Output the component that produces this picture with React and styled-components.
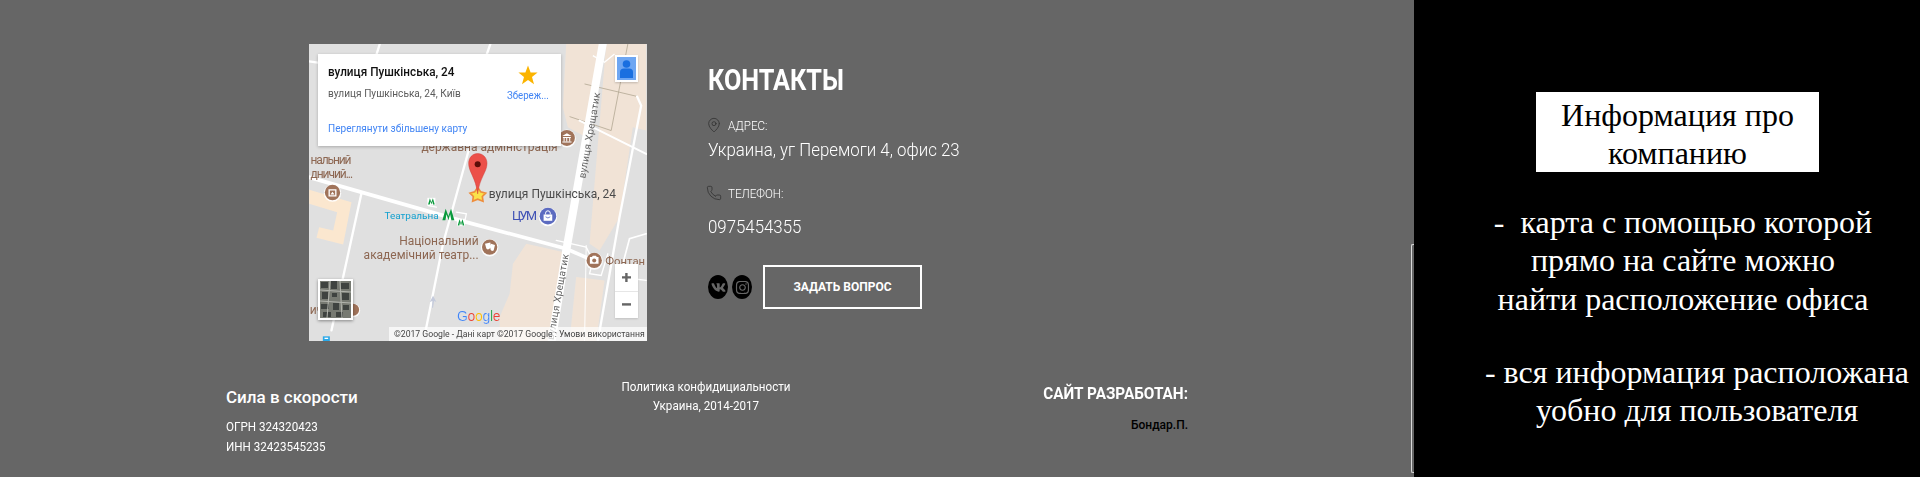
import React from "react";
import styled, { createGlobalStyle } from "styled-components";
import { MapPin, Phone } from "lucide-react";
import { FaVk, FaInstagram } from "react-icons/fa";

const Global = createGlobalStyle`
  html, body { margin: 0; padding: 0; background: #666; }
  body { font-family: Roboto, "Liberation Sans", sans-serif; }
`;

const Page = styled.div`
  display: flex;
  width: 1920px;
  height: 477px;
  overflow: hidden;
`;
const Main = styled.main`
  width: 1414px;
  flex: none;
  background: #666;
  padding: 44px 0 0 226px;
  box-sizing: border-box;
  color: #fff;
`;
const TopRow = styled.section`
  display: flex;
  margin-left: 83px;
  height: 297px;
`;
const MapBox = styled.div`
  position: relative;
  width: 338px;
  height: 297px;
  flex: none;
  overflow: hidden;
  background: #e0e0e0;
  font-family: Roboto, sans-serif;
`;
const MapArt = styled.svg`
  display: block;
  width: 338px;
  height: 297px;
  filter: blur(0.35px);
`;
const InfoCard = styled.div`
  position: absolute;
  left: 9px;
  top: 10px;
  width: 243px;
  height: 92px;
  background: #fff;
  box-shadow: 0 1px 3px rgba(0, 0, 0, 0.25);
`;
const CardText = styled.div`
  position: absolute;
  left: 10px;
  top: ${(p) => p.$top}px;
  font-size: ${(p) => p.$size}px;
  line-height: 16px;
  font-weight: ${(p) => p.$weight || 400};
  color: ${(p) => p.$color};
  white-space: nowrap;
  transform: scaleX(${(p) => p.$sx});
  transform-origin: left center;
`;
const SaveBox = styled.div`
  position: absolute;
  left: 180px;
  top: 11px;
  width: 60px;
  display: flex;
  flex-direction: column;
  align-items: center;
  font-size: 11.5px;
  line-height: 16px;
  color: #4285f4;
  span { transform: scaleX(0.84); margin-top: 2px; }
`;
const Pegman = styled.div`
  position: absolute;
  left: 306px;
  top: 11px;
  width: 23px;
  height: 27px;
  box-sizing: border-box;
  border: 2px solid #fff;
  background: #6ea6f2;
  box-shadow: 0 1px 2px rgba(0, 0, 0, 0.2);
  display: flex;
`;
const ZoomBox = styled.div`
  position: absolute;
  left: 306px;
  top: 220px;
  width: 23px;
  height: 54px;
  background: #fff;
  display: flex;
  flex-direction: column;
  box-shadow: 0 1px 2px rgba(0, 0, 0, 0.15);
`;
const ZoomBtn = styled.div`
  flex: 1;
  display: flex;
  align-items: center;
  justify-content: center;
  &:first-child { border-bottom: 1px solid #e6e6e6; }
`;
const Thumb = styled.div`
  position: absolute;
  left: 9px;
  top: 235px;
  width: 35px;
  height: 41px;
  box-sizing: border-box;
  border: 2px solid #fff;
  box-shadow: 0 1px 3px rgba(0, 0, 0, 0.4);
  background: #666;
  display: flex;
`;
const Attribution = styled.div`
  position: absolute;
  right: 0;
  bottom: 0;
  width: 258px;
  height: 14px;
  box-sizing: border-box;
  padding-left: 5px;
  background: rgba(255, 255, 255, 0.7);
  color: #444;
  font-size: 9.5px;
  line-height: 14px;
  span {
    display: block;
    white-space: nowrap;
    width: max-content;
    transform: scaleX(0.91);
    transform-origin: left center;
  }
`;

const Contacts = styled.div`
  margin-left: 61px;
  display: flex;
  flex-direction: column;
  align-items: flex-start;
`;
const Title = styled.h2`
  margin: 21px 0 0;
  font-size: 29px;
  line-height: 30px;
  font-weight: 700;
  color: #fff;
  transform: scaleX(0.87);
  transform-origin: left center;
`;
const Label = styled.div`
  display: flex;
  align-items: center;
  height: 16px;
  margin-top: ${(p) => p.$mt}px;
  font-size: 12.5px;
  font-weight: 300;
  color: #fff;
  svg { color: #2c2c2c; width: 16px; margin-left: -2px; margin-right: 6px; flex: none; }
  span { transform: scaleX(0.93); transform-origin: left center; }
`;
const Value = styled.div`
  margin-top: ${(p) => p.$mt}px;
  font-size: 18px;
  line-height: 22px;
  font-weight: 300;
  color: #fff;
  white-space: nowrap;
  transform: scaleX(0.935);
  transform-origin: left center;
`;
const ActionRow = styled.div`
  display: flex;
  align-items: center;
  margin-top: 27px;
`;
const Social = styled.div`
  width: 20px;
  height: 24px;
  border-radius: 50%;
  background: #000;
  color: #666;
  display: flex;
  align-items: center;
  justify-content: center;
  margin-right: 4px;
  font-size: 15px;
`;
const AskButton = styled.div`
  margin-left: 7px;
  width: 159px;
  height: 44px;
  box-sizing: border-box;
  border: 2px solid #fff;
  display: flex;
  align-items: center;
  justify-content: center;
  font-size: 12px;
  font-weight: 700;
  color: #fff;
`;

const Footer = styled.footer`
  display: grid;
  grid-template-columns: 380px 200px 382px;
  margin-top: 36px;
`;
const FootCol = styled.div`
  padding-top: ${(p) => p.$top}px;
  text-align: ${(p) => p.$align};
`;
const Company = styled.div`
  font-size: 17px;
  line-height: 20px;
  font-weight: 500;
  margin-bottom: 10px;
`;
const Small = styled.div`
  font-size: 12.5px;
  line-height: 20px;
  font-weight: 400;
  transform: scaleX(0.93);
  transform-origin: left center;
`;
const Policy = styled.div`
  font-size: 12.5px;
  line-height: 19px;
  white-space: nowrap;
  transform: scaleX(0.93);
`;
const DevTitle = styled.div`
  font-size: 17px;
  line-height: 20px;
  font-weight: 700;
  transform: scaleX(0.9);
  transform-origin: right center;
`;
const DevName = styled.div`
  margin-top: 12px;
  font-size: 12px;
  line-height: 20px;
  font-weight: 500;
  color: #000;
`;

const Side = styled.aside`
  position: relative;
  flex: 1;
  background: #000;
  color: #fff;
  font-family: "Liberation Serif", "Times New Roman", serif;
  font-size: 32px;
  line-height: 38.3px;
  text-align: center;
  &::before {
    content: "";
    position: absolute;
    left: -3px;
    top: 244px;
    width: 3px;
    height: 229px;
    box-sizing: border-box;
    border: 1px solid #d8d8d8;
    border-right: 0;
    border-radius: 2px 0 0 2px;
  }
`;
const InfoBox = styled.div`
  width: 283px;
  height: 80px;
  margin: 92px 0 0 122px;
  background: #fff;
  color: #000;
  padding: 4px 20px 0;
  box-sizing: border-box;
`;
const SideBlock = styled.div`
  white-space: pre;
  width: 506px;
  margin-left: ${(p) => p.$ml}px;
  margin-top: ${(p) => p.$mt}px;
`;

const brown = "#8d6752";

const Dot = ({ x, y, r, c }) => (
  <g>
    <circle cx={x} cy={y + 2} r={r + 3} fill="#fff" opacity="0.9" />
    <circle cx={x} cy={y} r={r} fill={c} />
  </g>
);
const Metro = ({ x, y, s }) => (
  <path
    d={`M${x - s} ${y + s * 0.9} L${x - s * 0.45} ${y - s} L${x} ${y + s * 0.2} L${x + s * 0.45} ${y - s} L${x + s} ${y + s * 0.9} L${x + s * 0.5} ${y + s * 0.9} L${x + s * 0.3} ${y - s * 0.1} L${x} ${y + s * 0.9} L${x - s * 0.3} ${y - s * 0.1} L${x - s * 0.5} ${y + s * 0.9} Z`}
    fill="#0a9a3c"
  />
);

const MapDrawing = () => (
  <MapArt viewBox="28 40 1014 892">
    <rect x="28" y="40" width="1014" height="892" fill="#e0e0e0" />
    {/* blocks */}
    <path d="M800 40 H905 L860 320 L805 290 L790 230 Z" fill="#f1e3d6" />
    <path d="M920 40 H1040 V300 L1000 290 L960 560 L900 660 L870 640 Z" fill="#f1e3d6" />
    <path d="M680 640 L790 665 L765 932 H600 V860 L630 790 L640 700 Z" fill="#f1e3d6" />
    <path d="M830 740 L915 750 L890 932 H810 Z" fill="#f1e3d6" />
    <path d="M28 478 L155 515 L130 642 L50 622 L58 590 L100 600 L112 545 L28 520 Z" fill="#fbe7cf" />
    {/* thin building outlines */}
    <g fill="none" stroke="#b5aa95" strokeWidth="2.5">
      <path d="M985 40 L935 300 L810 258" />
      <path d="M855 160 L1015 198" />
      <path d="M880 75 L915 95 L945 70" stroke="#fff" strokeWidth="4" />
    </g>
    {/* roads */}
    <g fill="none" stroke="#fff" strokeLinecap="round">
      <path d="M910 38 L800 660 L755 940" strokeWidth="24" strokeLinecap="butt" />
      <path d="M20 438 L500 575 L800 655 L880 690" strokeWidth="11" />
      <path d="M515 330 L430 640 L378 900" strokeWidth="7" />
      <path d="M185 488 L95 900" strokeWidth="7" />
      <path d="M572 40 L560 75" strokeWidth="7" />
      <path d="M240 40 L230 72" strokeWidth="7" />
      <path d="M28 92 L54 96" strokeWidth="7" />
      <path d="M1013 198 L1025 225 L960 560 L895 932" strokeWidth="7" />
      <path d="M840 270 L1040 370" strokeWidth="6" />
      <path d="M860 645 L855 932" strokeWidth="3" />
      <path d="M770 630 L860 650 L880 690 L870 730 L905 735 L925 670" strokeWidth="4" />
      <path d="M1040 610 L990 625 L970 700" strokeWidth="5" />
      <path d="M1040 750 L1000 745" strokeWidth="4" />
      <path d="M385 525 L410 530 M470 545 L500 550 L495 575" strokeWidth="4" />
    </g>
    {/* road names */}
    <g fontFamily="Roboto, sans-serif" fontSize="30" fill="#666" letterSpacing="1">
      <text transform="translate(857 445) rotate(-80)">вулиця Хрещатик</text>
      <text transform="translate(762 930) rotate(-80)">вулиця Хрещатик</text>
    </g>
    {/* POI labels */}
    <g fontFamily="Roboto, sans-serif" fontSize="36" fill={brown}>
      <text x="365" y="362">державна адміністрація</text>
      <text x="32" y="400" textLength="123">нальний</text>
      <text x="32" y="442" textLength="128">дничий...</text>
      <text x="537" y="645" textAnchor="end">Національний</text>
      <text x="537" y="687" textAnchor="end">академічний театр...</text>
      <text x="917" y="703" fontSize="34" textLength="120">Фонтан</text>
      <text x="30" y="852">ич</text>
    </g>
    <text x="567" y="502" fontFamily="Roboto, sans-serif" fontSize="36" fill="#4a4a4a">вулиця Пушкінська, 24</text>
    <text x="637" y="570" fontFamily="Roboto, sans-serif" fontSize="38" fill="#3f51b5" textLength="75">ЦУМ</text>
    <text x="254" y="567" fontFamily="Roboto, sans-serif" fontSize="30" fill="#12a0cf">Театральна</text>
    {/* POI badges */}
    <Dot x={802} y={322} r={24} c="#a0735a" />
    <path d="M788 316 L802 308 L816 316 Z M790 319 h24 v3 h-24 Z M792 322 h3 v10 h-3 Z M800 322 h3 v10 h-3 Z M809 322 h3 v10 h-3 Z M788 333 h28 v3 h-28 Z" fill="#fff" />
    <Dot x={98} y={486} r={23} c="#a0735a" />
    <path d="M86 476 h24 v22 h-24 Z M90 480 v14 h16 v-14 Z M92 492 l6 -8 l6 8 Z" fill="#fff" fillRule="evenodd" />
    <Dot x={570} y={650} r={23} c="#a0735a" />
    <path d="M556 640 L572 636 L574 650 Q566 662 560 654 Z M574 640 L586 644 L582 660 Q574 664 572 656 Z" fill="#fff" />
    <Dot x={884} y={690} r={23} c="#a0735a" />
    <path d="M871 680 h6 l3 -4 h9 l3 4 h5 v20 h-26 Z" fill="#fff" />
    <circle cx="884" cy="690" r="6" fill="#a0735a" />
    <Dot x={160} y={838} r={18} c="#a0735a" />
    <Dot x={745} y={557} r={25} c="#5c6bc0" />
    <path d="M732 552 h26 v19 h-26 Z" fill="#fff" />
    <path d="M738 552 v-4 a7 7 0 0 1 14 0 v4" fill="none" stroke="#fff" strokeWidth="3" />
    <path d="M738 559 q7 7 14 0" fill="none" stroke="#5c6bc0" strokeWidth="2.5" />
    {/* metro */}
    <rect x="383" y="502" width="24" height="22" fill="#fff" />
    <rect x="472" y="565" width="24" height="22" fill="#fff" />
    <Metro x={395} y={513} s={10} />
    <Metro x={484} y={576} s={10} />
    <Metro x={446} y={553} s={18} />
    {/* small arrow + transit */}
    <path d="M400 796 L410 815 L403 812 L400 832 L397 832 L398 812 L390 815 Z" fill="#c5cbdc" />
    <rect x="69" y="918" width="21" height="14" fill="#2aa8e8" />
    <rect x="74" y="922" width="11" height="4" fill="#fff" />
    {/* pin */}
    <path d="M534 470 L543 484 L558 488 L548 498 L550 512 L534 506 L519 512 L521 498 L511 488 L525 484 Z" stroke="#ee8e3c" strokeWidth="5" fill="#fbe34a" />
    <path d="M534 369 C518 369 507 382 507 398 C507 425 528 440 534 490 C540 440 562 425 562 398 C562 382 550 369 534 369 Z" fill="#ec5049" stroke="#cf3d36" strokeWidth="1.5" />
    <circle cx="534" cy="401" r="9" fill="#5d0d08" />
    {/* Google */}
    <text x="472" y="871" fontFamily="Liberation Sans, sans-serif" fontSize="42" stroke="#fff" strokeWidth="0.4" letterSpacing="-1">
      <tspan fill="#4285f4">G</tspan>
      <tspan fill="#ea4335">o</tspan>
      <tspan fill="#fbbc05">o</tspan>
      <tspan fill="#4285f4">g</tspan>
      <tspan fill="#34a853">l</tspan>
      <tspan fill="#ea4335">e</tspan>
    </text>
  </MapArt>
);

const Satellite = () => (
  <svg width="31" height="37" viewBox="0 0 31 37" style={{ filter: "blur(0.5px)" }}>
    <rect width="31" height="37" fill="#777a72" />
    <g fill="#3f4340">
      <rect x="1" y="1" width="7" height="6" /><rect x="11" y="0" width="6" height="8" /><rect x="21" y="2" width="8" height="6" />
      <rect x="2" y="11" width="6" height="7" /><rect x="12" y="12" width="5" height="4" /><rect x="22" y="12" width="7" height="7" />
      <rect x="1" y="23" width="8" height="5" /><rect x="13" y="22" width="6" height="7" /><rect x="23" y="24" width="6" height="5" />
      <rect x="3" y="31" width="8" height="5" /><rect x="16" y="31" width="7" height="5" />
    </g>
    <g stroke="#b3b5ae" strokeWidth="1" fill="none">
      <path d="M0 20 L31 22" />
      <path d="M10 0 L7 37" />
      <path d="M20 0 L22 37" />
      <path d="M0 9 L31 11" />
    </g>
  </svg>
);

export default function App() {
  return (
    <Page>
      <Global />
      <Main>
        <TopRow>
          <MapBox>
            <MapDrawing />
            <InfoCard>
              <CardText $top={10} $size={12.5} $weight={500} $color="#111" $sx={0.94}>вулиця Пушкінська, 24</CardText>
              <CardText $top={31} $size={11.5} $color="#5b5b5b" $sx={0.88}>вулиця Пушкінська, 24, Київ</CardText>
              <CardText $top={66} $size={11.5} $color="#4285f4" $sx={0.875}>Переглянути збільшену карту</CardText>
              <SaveBox>
                <svg width="20" height="20" viewBox="0 0 20 20">
                  <path d="M10 0.5 L12.6 7.4 L19.6 7.6 L14 12 L16 19.2 L10 15 L4 19.2 L6 12 L0.4 7.6 L7.4 7.4 Z" fill="#fbb400" />
                </svg>
                <span>Збереж...</span>
              </SaveBox>
            </InfoCard>
            <Pegman>
              <svg width="19" height="23" viewBox="0 0 19 23">
                <circle cx="9.5" cy="7" r="3.8" fill="#1a6fe0" />
                <path d="M3 21 V15 Q3 11.5 7 11.5 H12 Q16 11.5 16 15 V21 Z" fill="#1a6fe0" />
              </svg>
            </Pegman>
            <ZoomBox>
              <ZoomBtn>
                <svg width="11" height="11" viewBox="0 0 11 11"><path d="M4.2 1 h2.4 v3.2 h3.4 v2.4 h-3.4 v3.4 h-2.4 v-3.4 h-3.2 v-2.4 h3.2 Z" fill="#666" /></svg>
              </ZoomBtn>
              <ZoomBtn>
                <svg width="11" height="11" viewBox="0 0 11 11"><rect x="1" y="4.2" width="9" height="2.4" fill="#666" /></svg>
              </ZoomBtn>
            </ZoomBox>
            <Thumb><Satellite /></Thumb>
            <Attribution><span>©2017 Google - Дані карт ©2017 Google  :  Умови використання</span></Attribution>
          </MapBox>
          <Contacts>
            <Title>КОНТАКТЫ</Title>
            <Label $mt={22}>
              <MapPin size={16} strokeWidth={1.1} />
              <span>АДРЕС:</span>
            </Label>
            <Value $mt={6}>Украина, уг Перемоги 4, офис 23</Value>
            <Label $mt={24}>
              <Phone size={16} strokeWidth={1.1} />
              <span>ТЕЛЕФОН:</span>
            </Label>
            <Value $mt={15}>0975454355</Value>
            <ActionRow>
              <Social><FaVk /></Social>
              <Social><FaInstagram /></Social>
              <AskButton>ЗАДАТЬ ВОПРОС</AskButton>
            </ActionRow>
          </Contacts>
        </TopRow>
        <Footer>
          <FootCol $top={10} $align="left">
            <Company>Сила в скорости</Company>
            <Small>ОГРН 324320423</Small>
            <Small>ИНН 32423545235</Small>
          </FootCol>
          <FootCol $top={0} $align="center">
            <Policy>Политика конфидициальности</Policy>
            <Policy>Украина, 2014-2017</Policy>
          </FootCol>
          <FootCol $top={6} $align="right">
            <DevTitle>САЙТ РАЗРАБОТАН:</DevTitle>
            <DevName>Бондар.П.</DevName>
          </FootCol>
        </Footer>
      </Main>
      <Side>
        <InfoBox>Информация про компанию</InfoBox>
        <SideBlock $ml={16} $mt={31}>{"-  карта с помощью которой\nпрямо на сайте можно\nнайти расположение офиса"}</SideBlock>
        <SideBlock $ml={30} $mt={35}>{"- вся информация расположана\nуобно для пользователя"}</SideBlock>
      </Side>
    </Page>
  );
}
